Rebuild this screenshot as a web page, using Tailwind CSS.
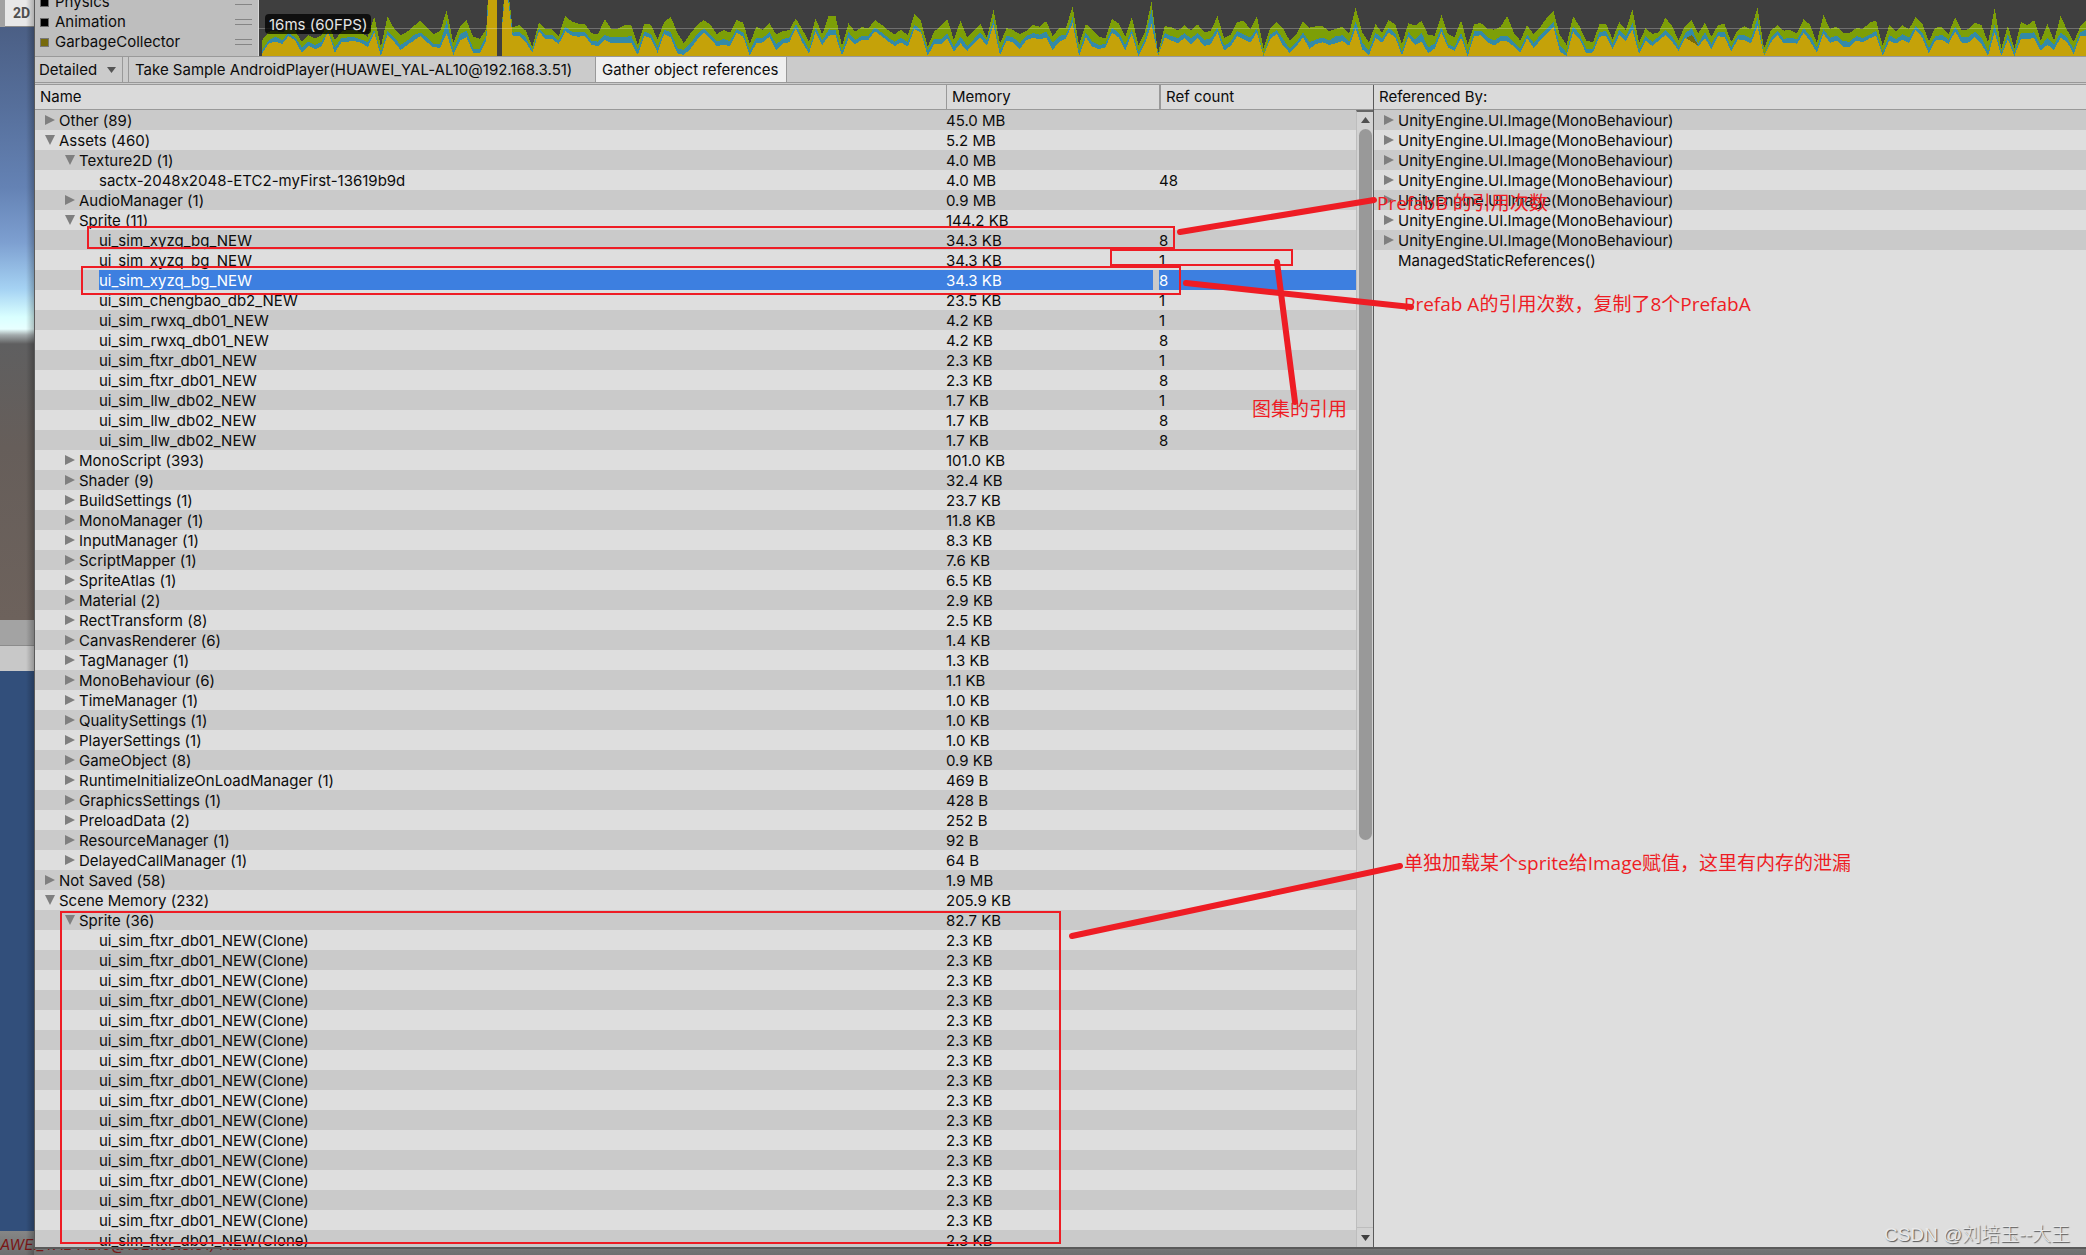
<!DOCTYPE html>
<html lang="en">
<head>
<meta charset="utf-8">
<title>Profiler</title>
<script src="https://cdn.jsdelivr.net/npm/@tailwindcss/browser@4"></script>
</head>
<body class="overflow-hidden bg-[#757575] font-['Inter',sans-serif] text-[15px] leading-5 text-[#0c0c0c] [font-feature-settings:'calt'_0]">
<div class="relative flex h-screen flex-col overflow-hidden pb-[6px] pl-[34px]">

  <!-- Editor behind the profiler window -->
  <div class="absolute inset-0 flex flex-col overflow-hidden" aria-hidden="true">
    <div class="flex h-[27px] shrink-0 bg-[#a2a2a2] pl-[5px]">
      <div class="w-[29px] border-b border-[#8a8a8a] bg-[#e8e8e8] pt-1 pl-2 font-['Roboto',sans-serif] text-[14px] leading-[18px] font-bold text-[#505050]">2D</div>
    </div>
    <div class="h-[593px] shrink-0 bg-[linear-gradient(#4b5f85_0px,#566f9b_80px,#6482b4_160px,#7d9fd0_215px,#a5d2f3_262px,#d9ffff_290px,#e8ffff_302px,#a3aaac_308px,#5f5f60_317px,#665e5a_420px,#6d625c_593px)]"></div>
    <div class="h-[26px] shrink-0 border-b border-[#8c8c8c] bg-[#a3a3a3]"></div>
    <div class="h-[25px] shrink-0 bg-[#c8c8c8]"></div>
    <div class="grow bg-[#324f7b]"></div>
    <div class="h-6 shrink-0 bg-[linear-gradient(#868686,#707070)] leading-7 whitespace-nowrap text-[#7a1616] italic">AWEI_YAL-AL10@192.168.3.51) Null</div>
  </div>
  <div class="absolute inset-y-0 left-[26px] w-2 bg-linear-to-r from-black/0 to-black/25"></div>

  <main class="relative flex min-h-0 grow flex-col border-b-2 border-l border-b-[#5a5a5a] border-l-[#5a5a5a] bg-[#cbcbcb]">
    <section class="flex h-14 shrink-0" aria-label="CPU usage">
      <ul class="flex w-[224px] shrink-0 flex-col justify-end border-r border-[#d8d8d8] bg-[#bebebe] pr-[6px] pb-1 pl-[5px]">
        <li class="flex h-5 shrink-0 items-center gap-[6px]"><i class="size-[9px] border border-[#6a6a6a] bg-black"></i>Physics<i class="ml-auto h-[6px] w-[17px] border-y border-[#858585]"></i></li>
        <li class="flex h-5 shrink-0 items-center gap-[6px]"><i class="size-[9px] border border-[#6a6a6a] bg-black"></i>Animation<i class="ml-auto h-[6px] w-[17px] border-y border-[#858585]"></i></li>
        <li class="flex h-5 shrink-0 items-center gap-[6px]"><i class="size-[9px] border border-[#777] bg-[#776a0c]"></i>GarbageCollector<i class="ml-auto h-[6px] w-[17px] border-y border-[#858585]"></i></li>
      </ul>
      <div class="relative min-w-0 grow bg-[#3f3f3f]">
        <svg id="chart" class="block h-full w-full" viewBox="0 0 1827 168" preserveAspectRatio="none" shape-rendering="crispEdges"></svg>
        <span class="absolute top-[14px] left-[6px] h-5 rounded bg-black/75 px-1 leading-[21px] text-[#e6e6e6]">16ms (60FPS)</span>
      </div>
    </section>

    <div class="flex h-[27px] shrink-0 border-y border-[#999]">
      <label class="relative flex w-[88px] border-r border-[#999]">
        <select class="w-full appearance-none bg-transparent pt-px pl-1 outline-none" aria-label="View"><option>Detailed</option></select>
        <svg class="pointer-events-none absolute top-[10px] right-[6px] h-[6px] w-[9px]" viewBox="0 0 9 6"><path d="M0 0h9L4.500 6z" fill="#555"/></svg>
      </label>
      <button class="ml-[5px] w-[468px] border-x border-[#999] pt-px pl-[6px] text-left whitespace-nowrap">Take Sample AndroidPlayer(HUAWEI_YAL-AL10@192.168.3.51)</button>
      <button class="w-[191px] border-r border-[#999] bg-[#efefef] pt-px pl-[6px] text-left whitespace-nowrap">Gather object references</button>
    </div>

    <div class="mt-px flex min-h-0 grow border-t border-[#999]">
      <section class="relative w-[1339px] shrink-0 overflow-hidden border-r border-[#5a5a5a] bg-[#dedede]">
        <table class="w-full table-fixed border-separate border-spacing-0 text-left">
          <colgroup><col><col class="w-[213px]"><col class="w-[214px]"></colgroup>
          <thead>
            <tr class="h-[25px] bg-[#dadada]">
              <th class="border-b border-[#999] p-0 pl-[5px] font-normal">Name</th>
              <th class="border-b border-l border-[#999] p-0 pl-[5px] font-normal">Memory</th>
              <th class="border-b border-l-2 border-[#999] p-0 pl-[5px] font-normal">Ref count</th>
            </tr>
          </thead>
          <tbody id="rows" class="leading-[19px]"></tbody>
        </table>
        <div class="absolute top-[25px] right-0 bottom-0 flex w-[17px] flex-col items-center border-t-2 border-l border-t-[#666] border-l-[#bdbdbd] bg-[#d2d2d2]">
          <svg class="mt-[5px] h-[6px] w-[9px] shrink-0" viewBox="0 0 9 6"><path d="M0 6h9L4.500 0z" fill="#505050"/></svg>
          <div class="mt-[6px] h-[711px] w-[13px] shrink-0 rounded-full bg-[#999]"></div>
          <div class="mt-auto flex h-5 w-full shrink-0 justify-center border-t border-[#bdbdbd] pt-[7px]">
            <svg class="h-[6px] w-[9px]" viewBox="0 0 9 6"><path d="M0 0h9L4.500 6z" fill="#404040"/></svg>
          </div>
        </div>
      </section>
      <section class="min-w-0 grow bg-[#dedede]">
        <h2 class="h-[25px] border-b border-[#999] bg-[#dadada] pt-[2px] pl-[5px]">Referenced By:</h2>
        <ul id="refs" class="leading-[19px]"></ul>
      </section>
    </div>
  </main>

  <!-- Notes drawn over the window -->
  <svg class="pointer-events-none absolute top-0 left-0 h-[1255px] w-[2086px]" viewBox="0 0 2086 1255" fill="none" stroke="#ee1c24">
    <g stroke-width="2">
      <rect x="88" y="227" width="1086" height="21"/>
      <rect x="1111" y="250" width="181" height="15"/>
      <rect x="82" y="267" width="1098" height="27"/>
      <rect x="61" y="912" width="999" height="331"/>
    </g>
    <g stroke-width="6" stroke-linecap="round">
      <path d="M1180 232L1374 200"/>
      <path d="M1186 283L1411 307"/>
      <path d="M1277 262L1295 402"/>
      <path d="M1072 936L1400 866"/>
    </g>
  </svg>
  <div class="font-['Open_Sans','Noto_Sans_CJK_SC',sans-serif] text-[19px] leading-6 whitespace-nowrap text-[#ee1c24]" lang="zh-CN">
    <p class="absolute top-[191px] left-[1377px]">PrefabB 的引用次数</p>
    <p class="absolute top-[292px] left-[1404px]">Prefab A的引用次数，复制了8个PrefabA</p>
    <p class="absolute top-[397px] left-[1252px]">图集的引用</p>
    <p class="absolute top-[851px] left-[1404px]">单独加载某个sprite给Image赋值，这里有内存的泄漏</p>
    <p class="absolute right-4 bottom-[8px] font-['Liberation_Sans','Noto_Sans_CJK_SC',sans-serif] font-light text-[#e9e9e9] [text-shadow:1px_1px_1px_#555]">CSDN @刘培玉--大王</p>
  </div>
</div>

<script>
  // depth, state (c = closed, o = open, - = leaf, s = selected leaf), name, memory, ref count
  const tree = [
    [0,'c','Other (89)','45.0 MB'],[0,'o','Assets (460)','5.2 MB'],[1,'o','Texture2D (1)','4.0 MB'],
    [2,'-','sactx-2048x2048-ETC2-myFirst-13619b9d','4.0 MB','48'],[1,'c','AudioManager (1)','0.9 MB'],
    [1,'o','Sprite (11)','144.2 KB'],[2,'-','ui_sim_xyzq_bg_NEW','34.3 KB','8'],[2,'-','ui_sim_xyzq_bg_NEW','34.3 KB','1'],
    [2,'s','ui_sim_xyzq_bg_NEW','34.3 KB','8'],[2,'-','ui_sim_chengbao_db2_NEW','23.5 KB','1'],
    [2,'-','ui_sim_rwxq_db01_NEW','4.2 KB','1'],[2,'-','ui_sim_rwxq_db01_NEW','4.2 KB','8'],
    [2,'-','ui_sim_ftxr_db01_NEW','2.3 KB','1'],[2,'-','ui_sim_ftxr_db01_NEW','2.3 KB','8'],
    [2,'-','ui_sim_llw_db02_NEW','1.7 KB','1'],[2,'-','ui_sim_llw_db02_NEW','1.7 KB','8'],[2,'-','ui_sim_llw_db02_NEW','1.7 KB','8'],
    [1,'c','MonoScript (393)','101.0 KB'],[1,'c','Shader (9)','32.4 KB'],[1,'c','BuildSettings (1)','23.7 KB'],
    [1,'c','MonoManager (1)','11.8 KB'],[1,'c','InputManager (1)','8.3 KB'],[1,'c','ScriptMapper (1)','7.6 KB'],
    [1,'c','SpriteAtlas (1)','6.5 KB'],[1,'c','Material (2)','2.9 KB'],[1,'c','RectTransform (8)','2.5 KB'],
    [1,'c','CanvasRenderer (6)','1.4 KB'],[1,'c','TagManager (1)','1.3 KB'],[1,'c','MonoBehaviour (6)','1.1 KB'],
    [1,'c','TimeManager (1)','1.0 KB'],[1,'c','QualitySettings (1)','1.0 KB'],[1,'c','PlayerSettings (1)','1.0 KB'],
    [1,'c','GameObject (8)','0.9 KB'],[1,'c','RuntimeInitializeOnLoadManager (1)','469 B'],
    [1,'c','GraphicsSettings (1)','428 B'],[1,'c','PreloadData (2)','252 B'],[1,'c','ResourceManager (1)','92 B'],
    [1,'c','DelayedCallManager (1)','64 B'],[0,'c','Not Saved (58)','1.9 MB'],[0,'o','Scene Memory (232)','205.9 KB'],
    [1,'o','Sprite (36)','82.7 KB']
  ];
  for (let i = 0; i < 16; i++) tree.push([2,'-','ui_sim_ftxr_db01_NEW(Clone)','2.3 KB']);

  const closed = '<svg class="mr-1 h-[10px] w-[10px] shrink-0" viewBox="0 0 10 10"><path d="M0 0L10 5L0 10z" fill="#7f7f7f"/></svg>';
  const open = '<svg class="mr-1 h-[10px] w-[10px] shrink-0" viewBox="0 0 10 10"><path d="M0 0H10L5 10z" fill="#7f7f7f"/></svg>';
  const indent = ['flex items-center pl-[10px]', 'flex items-center pl-[30px]', 'pl-16'];

  document.getElementById('rows').innerHTML = tree.map(([depth, state, name, memory, refs = '']) => {
    const on = state === 's';
    const arrow = state === 'c' ? closed : state === 'o' ? open : '';
    return `<tr class="h-5 odd:bg-[#cacaca] even:bg-[#dedede]">
      <td class="p-0"><div class="${indent[depth]}">${on ? '<div class="bg-[#3d7fe0] pt-px text-white">' + name + '</div>' : arrow + '<span class="block pt-px">' + name + '</span>'}</div></td>
      <td class="p-0"><div class="${on ? 'mr-[6px] bg-[#3d7fe0] pt-px text-white' : 'pt-px'}">${memory}</div></td>
      <td class="p-0"><div class="${on ? 'bg-[#3d7fe0] pt-px text-white' : 'pt-px'}">${refs}</div></td></tr>`;
  }).join('');

  document.getElementById('refs').innerHTML =
    (`<li class="flex h-5 items-center pl-[10px] odd:bg-[#cacaca]">${closed}<span class="pt-px">UnityEngine.UI.Image(MonoBehaviour)</span></li>`).repeat(7) +
    '<li class="flex h-5 items-center pl-6"><span class="pt-px">ManagedStaticReferences()</span></li>';

  // One triple per frame: tops of the green, blue and yellow bands (168 is the baseline)
  const frames = `120,150,160 95,120,130 92,110,125 98,120,132 85,100,108 92,112,122 125,142,158 105,125,137 115,135,148 105,125,138
70,92,95 120,142,158 95,115,127 90,112,125 90,112,123 98,118,128 110,127,142 50,90,98 140,155,168 50,92,105 85,112,125 105,135,150 95,122,135 78,105,122
62,98,108 82,112,127 102,131,142 93,131,143 32,62,100 128,150,165 80,103,122 60,92,112 110,146,158 116,147,160 88,105,122 -300,-300,-280 168,168,168 -80,-70,-50
82,98,108 75,95,107 92,112,127 140,150,158 66,85,94 87,105,118 88,105,117 108,122,132 48,80,94 65,95,107 71,97,110 73,97,108 100,122,135 102,125,138
57,105,120 87,112,129 86,112,129 76,112,129 75,107,128 135,150,165 71,95,107 74,102,115 118,142,158 67,90,102 50,96,112 98,145,160 130,150,165 100,130,146
76,103,120 60,86,98 73,103,116 102,125,138 90,117,135 98,123,138 60,88,98 68,97,110 132,152,166 80,113,130 90,113,127 70,97,110 103,133,152 94,118,130
90,112,127 55,72,84 88,112,128 127,150,160 55,82,95 103,122,136 47,88,107 47,90,105 138,155,167 70,97,115 95,120,133 81,108,120 86,108,120 60,82,94
74,97,108 90,113,124 103,125,138 88,113,127 107,127,140 42,74,87 62,90,98 140,152,167 95,118,133 77,118,133 57,100,115 120,140,155 62,110,130 112,138,153
92,118,130 72,98,112 112,122,138 30,58,75 130,152,165 84,106,122 90,112,127 103,130,147 92,108,120 75,99,113 80,104,118 63,95,113 108,128,150 84,107,125
84,105,116 20,52,70 135,155,168 72,98,112 88,125,140 110,135,147 115,132,142 57,84,98 70,98,112 110,135,152 50,88,100 135,155,168 95,118,130 5,30,72
160,166,168 78,99,112 82,108,122 92,114,129 76,99,114 92,116,133 73,98,115 97,120,138 93,115,133 48,83,96 114,137,152 104,125,138 66,93,108 63,103,118
88,113,128 48,85,97 143,165,168 84,104,118 66,90,101 87,118,138 123,147,159 102,127,138 63,97,112 83,127,146 79,118,132 79,113,127 94,121,135 86,108,130
80,106,123 100,126,138 23,65,84 98,128,148 127,152,166 72,98,114 99,115,128 60,84,98 73,100,112 132,155,166 70,96,110 77,120,135 63,100,125 105,142,160
107,130,145 45,82,96 102,133,143 112,142,152 60,97,112 134,158,168 72,94,108 69,92,106 87,112,127 89,122,137 80,108,124 48,108,124 98,128,139 122,145,158
76,104,115 103,128,143 82,107,122 53,85,100 33,65,80 105,135,155 135,158,168 48,78,96 80,104,118 122,147,160 127,147,157 72,95,110 72,94,107 117,132,147
66,90,105 90,110,123 29,68,88 128,150,162 84,108,122 102,126,138 97,110,122 53,90,105 77,108,124 120,140,152 78,100,114 60,84,122 100,130,140 68,97,114
110,132,147 75,97,109 72,97,111 126,142,155 90,106,118 78,106,120 88,115,130 23,55,78 145,166,168 92,115,128 76,92,104 92,117,130 90,113,128 100,118,131
57,85,98 75,108,124 128,144,158 45,88,102 87,113,128 80,107,122 99,124,140 99,125,140 84,108,122 87,115,127 68,104,115 62,93,107 138,158,168 75,104,122
94,118,131 76,103,119 88,113,130 51,78,90 70,97,112 123,144,161 83,108,122 81,105,119 102,119,132 51,80,94 90,111,128 88,111,128 69,95,111 75,115,132
128,154,167 23,72,96 145,158,168 77,103,118 145,157,168 66,98,116 75,100,116 60,97,115 122,138,153 72,113,134 122,134,150 48,98,113 90,112,126 125,148,162
80,97,107 58,88,108`.split(/\s+/).map(f => f.split(',').map(Number));
  const x = i => (3.3 + 6.587 * i).toFixed(1);
  const band = (n, fill) => `<path fill="${fill}" d="M${x(0)} 168 ${frames.map((f, i) => `L${x(i)} ${f[n]}`).join(' ')} V168z"/>`;
  document.getElementById('chart').innerHTML =
    band(0, '#7d9f07') + band(1, '#348aa7') + band(2, '#c5a209') +
    '<path fill="#776a0c" d="M1427 114L1433 105L1440 139z"/>' +
    '<rect x="238" y="0" width="5" height="168" fill="#3f3f3f"/>' +
    '<rect x="0" y="84" width="1827" height="3" fill="#fff" fill-opacity=".25"/>';
</script>
</body>
</html>
